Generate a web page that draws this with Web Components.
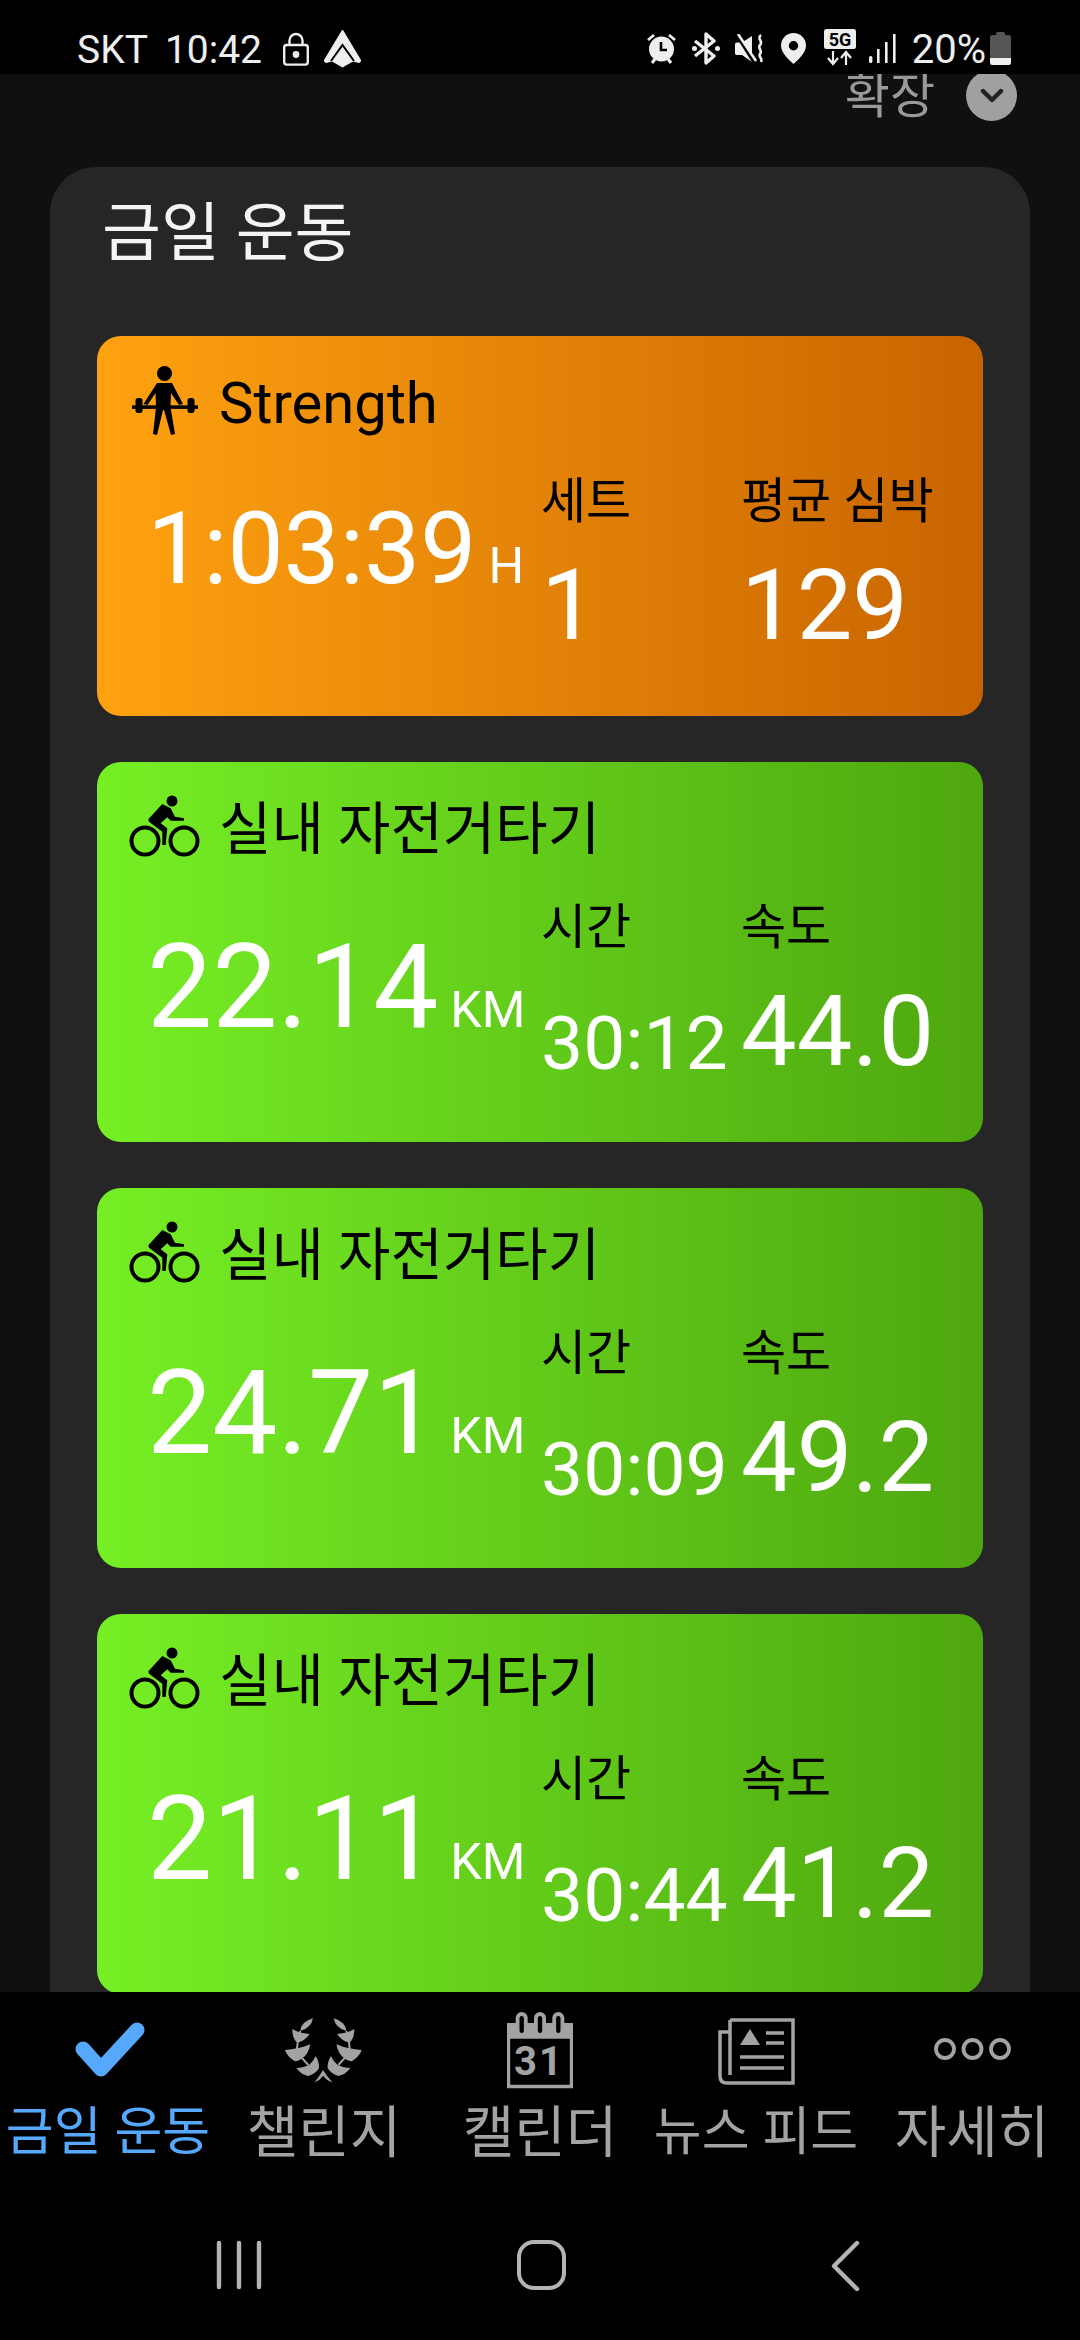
<!DOCTYPE html>
<html lang="ko">
<head>
<meta charset="utf-8">
<title>금일 운동</title>
<style>
  html, body { margin: 0; padding: 0; background: #000; }
  body { width: 1080px; height: 2340px; overflow: hidden; font-family: Roboto, "Noto Sans CJK KR", sans-serif; }
</style>
</head>
<body>
<app-screen>
  <status-bar></status-bar>
  <expand-row></expand-row>
  <today-panel heading="금일 운동">
    <workout-card kind="strength" name="Strength" value="1:03:39" unit="H">
      <workout-stat label="세트" value="1" size="big"></workout-stat>
      <workout-stat label="평균 심박" value="129" size="big"></workout-stat>
    </workout-card>
    <workout-card kind="bike" name="실내 자전거타기" value="22.14" unit="KM">
      <workout-stat label="시간" value="30:12"></workout-stat>
      <workout-stat label="속도" value="44.0" size="big"></workout-stat>
    </workout-card>
    <workout-card kind="bike" name="실내 자전거타기" value="24.71" unit="KM">
      <workout-stat label="시간" value="30:09"></workout-stat>
      <workout-stat label="속도" value="49.2" size="big"></workout-stat>
    </workout-card>
    <workout-card kind="bike" name="실내 자전거타기" value="21.11" unit="KM">
      <workout-stat label="시간" value="30:44"></workout-stat>
      <workout-stat label="속도" value="41.2" size="big"></workout-stat>
    </workout-card>
  </today-panel>
  <tab-bar></tab-bar>
  <system-keys></system-keys>
</app-screen>

<script>
const FONT = 'Roboto, "Noto Sans CJK KR", sans-serif';

class AppScreen extends HTMLElement {
    constructor() {
        super();
        this.attachShadow({ mode: 'open' });
        this.shadowRoot.innerHTML = `
            <style>
                :host {
                    display: flex;
                    flex-direction: column;
                    width: 1080px;
                    height: 2340px;
                    background: #101010;
                    overflow: hidden;
                    font-family: ${FONT};
                }
            </style>
            <slot></slot>
        `;
    }
}

class StatusBar extends HTMLElement {
    constructor() {
        super();
        this.attachShadow({ mode: 'open' });
        this.shadowRoot.innerHTML = `
            <style>
                :host {
                    display: flex;
                    flex: none;
                    height: 74px;
                    background: #000;
                    color: #eee;
                    font-size: 39px;
                    align-items: flex-start;
                    justify-content: space-between;
                    padding: 0 69px 0 77px;
                    box-sizing: border-box;
                    position: relative;
                    z-index: 1;
                }
                .side { display: flex; align-items: flex-start; height: 74px; }
                span { line-height: 46px; margin-top: 27px; white-space: nowrap; }
                svg { display: block; flex: none; fill: #eee; }
                .five {
                    width: 32px; height: 37px; margin-top: 29px; margin-left: 18px; flex: none;
                }
            </style>
            <div class="side">
                <span>SKT</span>
                <span style="margin-left:17px">10:42</span>
                <svg style="margin:32px 0 0 21px" width="26" height="34" viewBox="0 0 26 34">
                    <path d="M6.5 14V8.5a6.5 6.5 0 0 1 13 0V14" fill="none" stroke="#eee" stroke-width="2.4"/>
                    <rect x="1.2" y="13" width="23.6" height="19.6" rx="2.5" fill="none" stroke="#eee" stroke-width="2.4"/>
                    <circle cx="13" cy="22.5" r="3.4"/>
                </svg>
                <svg style="margin:30px 0 0 15px" width="37" height="38" viewBox="0 0 37 38">
                    <path d="M18.5 0 36.500 30q.5 2-1.500 2.500L29 31l-10.500 6L8 31l-6 1.500Q0 32 .5 30z" stroke="#eee" stroke-linejoin="round"/>
                    <path d="M7 31 18.500 15 30 31" fill="none" stroke="#000" stroke-width="2"/>
                </svg>
            </div>
            <div class="side">
                <svg style="margin-top:33px" width="29" height="31" viewBox="0 0 29 31">
                    <circle cx="14.500" cy="16" r="12.500"/>
                    <path d="M14 9v8h6" fill="none" stroke="#000" stroke-width="2.600"/>
                    <path d="M1 7l6-5M28 7l-6-5" stroke="#eee" stroke-width="2.800" fill="none"/>
                    <path d="M5 30l3-4M24 30l-3-4" stroke="#eee" stroke-width="3" fill="none"/>
                </svg>
                <svg style="margin:32px 0 0 16px" width="28" height="33" viewBox="0 0 28 33">
                    <path d="M3 9l19 15-8 7V2l8 7L3 24" fill="none" stroke="#eee" stroke-width="3.400" stroke-linejoin="round"/>
                    <circle cx="2.500" cy="16.500" r="2.500"/><circle cx="25.500" cy="16.500" r="2.500"/>
                </svg>
                <svg style="margin:34px 0 0 15px" width="29" height="30" viewBox="0 0 29 30">
                    <path d="M0 10q0-1.500 2-1.500h5L17 2v26L7 21H2q-2 0-2-1.500z"/>
                    <path d="M2 1l17 27" stroke="#000" stroke-width="3.600"/>
                    <path d="M3 0l18 27" stroke="#eee" stroke-width="2.600"/>
                    <path d="M26 1c-5 4 3 6-1 10-3 3 3 5 0 9-2 3 3 4 1 8" fill="none" stroke="#eee" stroke-width="2.600"/>
                </svg>
                <svg style="margin:33px 0 0 17px" width="25" height="31" viewBox="0 0 25 31">
                    <path fill-rule="evenodd" d="M12.500 0C5.500 0 0 5.500 0 12.500 0 20 8 27 12.500 31 17 27 25 20 25 12.500 25 5.500 19.500 0 12.500 0zm0 8a4.700 4.700 0 1 1 0 9.400 4.700 4.700 0 0 1 0-9.400z"/>
                </svg>
                <svg class="five" viewBox="0 0 32 37">
                    <rect x="0" y="0" width="32" height="20" rx="2.500"/>
                    <text x="16" y="17" text-anchor="middle" font-family="Roboto" font-weight="700" font-size="18" fill="#000">5G</text>
                    <path d="M9 22v12M4 29l5 6 5-6M22 36V24M17 29l5-6 5 6" fill="none" stroke="#eee" stroke-width="2.200"/>
                </svg>
                <svg style="margin:34px 0 0 13px" width="27" height="29" viewBox="0 0 27 29">
                    <rect x="0" y="22" width="3.400" height="7" rx="1.500"/>
                    <rect x="8" y="15" width="2.600" height="14"/>
                    <rect x="16" y="8" width="2.600" height="21"/>
                    <rect x="24" y="0" width="2.600" height="29"/>
                </svg>
                <span style="margin-left:16px;font-size:40px">20%</span>
                <svg style="margin:32px 0 0 4px" width="21" height="33" viewBox="0 0 21 33">
                    <path d="M6 3V1.500Q6 0 7.500 0h6Q15 0 15 1.500V3h3.500Q21 3 21 5.500V26H0V5.500Q0 3 2.500 3z" fill="#555"/>
                    <path d="M0 26h21v4.500Q21 33 18.500 33h-16Q0 33 0 30.500z"/>
                </svg>
            </div>
        `;
    }
}

class ExpandRow extends HTMLElement {
    constructor() {
        super();
        this.attachShadow({ mode: 'open' });
        this.shadowRoot.innerHTML = `
            <style>
                :host {
                    display: flex;
                    flex: none;
                    height: 93px;
                    justify-content: flex-end;
                    align-items: flex-start;
                    padding-right: 63px;
                    box-sizing: border-box;
                    color: #999;
                    font-size: 49px;
                }
                .txt { line-height: 46px; margin: 0 31px 0 0; }
                .btn {
                    width: 51px; height: 51px; border-radius: 50%;
                    background: #a0a0a0; margin-top: -4px;
                    display: flex; align-items: center; justify-content: center;
                }
            </style>
            <div class="txt">확장</div>
            <div class="btn">
                <svg width="24" height="16" viewBox="0 0 24 16">
                    <path d="M3 3l9 9 9-9" fill="none" stroke="#222" stroke-width="4.400" stroke-linecap="round" stroke-linejoin="round"/>
                </svg>
            </div>
        `;
    }
}

class TodayPanel extends HTMLElement {
    constructor() {
        super();
        this.attachShadow({ mode: 'open' });
        this.shadowRoot.innerHTML = `
            <style>
                :host {
                    display: block;
                    flex: 1;
                    min-height: 0;
                    margin: 0 50px;
                    padding: 0 47px;
                    background: #262626;
                    border-radius: 46px 46px 0 0;
                    overflow: hidden;
                }
                h1 {
                    margin: 0;
                    height: 169px;
                    padding-left: 5px;
                    box-sizing: border-box;
                    font-size: 64px;
                    font-weight: 400;
                    line-height: 134px;
                    color: #f4f4f4;
                }
                .list { display: flex; flex-direction: column; gap: 46px; }
            </style>
            <h1></h1>
            <div class="list"><slot></slot></div>
        `;
        this.shadowRoot.querySelector('h1').textContent = this.getAttribute('heading');
    }
}

const LIFTER = `<svg width="66" height="70" viewBox="0 0 66 70" style="margin-top:30px">
    <circle cx="32.500" cy="7.500" r="7.500"/>
    <path d="M25 17h15l11 21-4 1-8-12-.5 14 4.500 27-4 1-7-25h-1l-6 25-4-1 3-27-.5-14-8 12-4-1z"/>
    <rect x="0" y="39.300" width="66" height="3.600"/>
    <rect x="3.500" y="32" width="7" height="15" rx="2.500"/>
    <rect x="55.500" y="32" width="7" height="15" rx="2.500"/>
</svg>`;

const RIDER = `<svg width="72" height="70" viewBox="0 0 72 70" style="margin:28px 0 0 -3px">
    <circle cx="43" cy="11" r="5.500"/>
    <path d="M19.300 29.300 33.300 14l8.400 4.300 4.300 8.400 9 1.600v2.400H41.700l-3.400-3.400-6.600 6 6.600 5-1.600 16.700h-3.400v-13.300L20 31.700z"/>
    <circle cx="16" cy="51" r="13.500" fill="none" stroke="#000" stroke-width="4"/>
    <circle cx="55" cy="51" r="13.500" fill="none" stroke="#000" stroke-width="4"/>
</svg>`;

class WorkoutCard extends HTMLElement {
    constructor() {
        super();
        this.attachShadow({ mode: 'open' });
        const strength = this.getAttribute('kind') === 'strength';
        this.shadowRoot.innerHTML = `
            <style>
                :host {
                    display: block;
                    flex: none;
                    height: 380px;
                    border-radius: 24px;
                    overflow: hidden;
                    box-sizing: border-box;
                    color: #fff;
                    background: ${strength
                        ? 'linear-gradient(to right, #ffa210, #c86400)'
                        : 'linear-gradient(to right, #76ef25, #4ea70f)'};
                }
                .head {
                    display: flex;
                    align-items: flex-start;
                    height: 130px;
                    padding-left: 35px;
                    color: #000;
                }
                .icon { width: 87px; flex: none; }
                svg { display: block; }
                .name {
                    font-size: ${strength ? 58 : 57}px;
                    line-height: 70px;
                    margin-top: ${strength ? 32 : 33}px;
                    white-space: nowrap;
                }
                .body {
                    display: grid;
                    grid-template-columns: 444px 200px 1fr;
                }
                .main {
                    padding-left: 50px;
                    display: flex;
                    align-items: baseline;
                    margin-top: ${strength ? 13 : 25}px;
                    height: 140px;
                    white-space: nowrap;
                }
                .value { font-size: ${strength ? 100 : 116}px; line-height: 140px; }
                .unit { font-size: 50px; margin-left: 12px; }
            </style>
            <div class="head">
                <div class="icon">${strength ? LIFTER : RIDER}</div>
                <div class="name"></div>
            </div>
            <div class="body">
                <div class="main"><span class="value"></span><span class="unit"></span></div>
                <slot></slot>
            </div>
        `;
        this.shadowRoot.querySelector('.name').textContent = this.getAttribute('name');
        this.shadowRoot.querySelector('.value').textContent = this.getAttribute('value');
        this.shadowRoot.querySelector('.unit').textContent = this.getAttribute('unit');
    }
}

class WorkoutStat extends HTMLElement {
    constructor() {
        super();
        this.attachShadow({ mode: 'open' });
        const big = this.getAttribute('size') === 'big';
        this.shadowRoot.innerHTML = `
            <style>
                :host { display: block; white-space: nowrap; }
                .label { color: #000; font-size: 49px; line-height: 70px; margin-top: 1px; }
                .value {
                    font-size: ${big ? 99 : 75}px;
                    line-height: 110px;
                    margin-top: ${big ? 13 : 25}px;
                }
            </style>
            <div class="label"></div>
            <div class="value"></div>
        `;
        this.shadowRoot.querySelector('.label').textContent = this.getAttribute('label');
        this.shadowRoot.querySelector('.value').textContent = this.getAttribute('value');
    }
}

// laurel drawn in the coordinates of a 3x crop, left half then mirrored
const LEAVES = `
    <path d="M94 78Q96 50 132 40 126 70 94 78z"/>
    <path d="M70 72Q92 85 122 87 108 108 85 113 70 102 70 72z"/>
    <path d="M48 135Q70 134 84 130 106 126 124 118 118 148 100 160 85 172 75 167 55 155 48 135z"/>
    <path d="M82 190Q104 188 120 180 134 168 140 153 152 172 150 190 138 208 118 213 98 210 82 190z"/>
    <path d="M94 78 86 113 84 130 100 160 118 180" fill="none" stroke="currentColor" stroke-width="6"/>
`;

const TAB_ICONS = {
    check: `<svg width="70" height="56" viewBox="0 0 70 56" style="margin:30px 0 0 4px">
        <path d="M8 27 26 47 62 8" fill="none" stroke="currentColor" stroke-width="15" stroke-linecap="round" stroke-linejoin="round"/>
    </svg>`,
    laurel: `<svg width="110" height="90" viewBox="0 0 330 270" style="margin-top:13px" fill="currentColor">
        ${LEAVES}
        <g transform="translate(326 0) scale(-1 1)">${LEAVES}</g>
        <path d="M137 232Q150 215 162 195 174 215 190 232 172 226 163 212 152 226 137 232z"/>
    </svg>`,
    calendar: `<svg width="66" height="78" viewBox="0 0 66 78" style="margin-top:20px">
        <path d="M1.500 25h63v49.500h-63z" fill="none" stroke="currentColor" stroke-width="3.400"/>
        <rect x="0" y="11" width="66" height="14" fill="currentColor"/>
        <g fill="currentColor">
            <rect x="8.700" y="0" width="12" height="24" rx="6"/>
            <rect x="27" y="0" width="12" height="24" rx="6"/>
            <rect x="45.300" y="0" width="12" height="24" rx="6"/>
        </g>
        <g fill="#000">
            <rect x="12.500" y="4" width="4.400" height="17" rx="2.200"/>
            <rect x="30.800" y="4" width="4.400" height="17" rx="2.200"/>
            <rect x="49.100" y="4" width="4.400" height="17" rx="2.200"/>
        </g>
        <text x="32" y="63" text-anchor="middle" font-family="Roboto" font-weight="700" font-size="40" letter-spacing="2" fill="currentColor">31</text>
    </svg>`,
    news: `<svg width="77" height="67" viewBox="0 0 77 67" style="margin-top:26px">
        <path d="M12 2h63v63H9q-7 0-7-7V14h9" fill="none" stroke="currentColor" stroke-width="3.500"/>
        <path d="M12 2v55" fill="none" stroke="currentColor" stroke-width="3.500"/>
        <path d="M32 11 42 27H22z" fill="currentColor"/>
        <path d="M48 15h18M48 25h18M22 39h44M22 50h44" stroke="currentColor" stroke-width="3.400"/>
    </svg>`,
    more: `<svg width="77" height="24" viewBox="0 0 77 24" style="margin-top:45px">
        <g fill="none" stroke="currentColor" stroke-width="3.800">
            <circle cx="11" cy="12" r="9"/><circle cx="38.500" cy="12" r="9"/><circle cx="66" cy="12" r="9"/>
        </g>
    </svg>`
};

class TabItem extends HTMLElement {
    constructor() {
        super();
        this.attachShadow({ mode: 'open' });
        this.shadowRoot.innerHTML = `
            <style>
                :host {
                    display: block;
                    width: 216px;
                    text-align: center;
                    color: ${this.hasAttribute('active') ? '#55a8fb' : '#a3a3a3'};
                }
                .ic { height: 102px; display: flex; justify-content: center; align-items: flex-start; }
                .lb {
                    font-size: ${this.getAttribute('size') || 52}px;
                    line-height: 66px;
                    margin-top: 6px;
                    white-space: nowrap;
                }
            </style>
            <div class="ic">${TAB_ICONS[this.getAttribute('icon')]}</div>
            <div class="lb"></div>
        `;
        this.shadowRoot.querySelector('.lb').textContent = this.getAttribute('label');
    }
}

class TabBar extends HTMLElement {
    constructor() {
        super();
        this.attachShadow({ mode: 'open' });
        this.shadowRoot.innerHTML = `
            <style>
                :host { display: flex; flex: none; height: 222px; background: #000; }
            </style>
            <tab-item icon="check" label="금일 운동" active></tab-item>
            <tab-item icon="laurel" label="챌린지" size="56"></tab-item>
            <tab-item icon="calendar" label="캘린더" size="56"></tab-item>
            <tab-item icon="news" label="뉴스 피드"></tab-item>
            <tab-item icon="more" label="자세히" size="56"></tab-item>
        `;
    }
}

class SystemKeys extends HTMLElement {
    constructor() {
        super();
        this.attachShadow({ mode: 'open' });
        this.shadowRoot.innerHTML = `
            <style>
                :host {
                    display: flex;
                    flex: none;
                    height: 126px;
                    background: #000;
                    padding: 26px 0 0 216px;
                    box-sizing: border-box;
                    align-items: flex-start;
                }
                svg { display: block; flex: none; }
            </style>
            <svg width="46" height="50" viewBox="0 0 46 50">
                <path d="M3 3v44M23 3v44M43 3v44" stroke="#b4b4b4" stroke-width="4.400" stroke-linecap="round"/>
            </svg>
            <svg style="margin-left:255px" width="49" height="50" viewBox="0 0 49 50">
                <rect x="2" y="2" width="45" height="46" rx="15" fill="none" stroke="#b4b4b4" stroke-width="4"/>
            </svg>
            <svg style="margin-left:264px" width="30" height="52" viewBox="0 0 30 52">
                <path d="M27 3 4 26l23 23" fill="none" stroke="#b4b4b4" stroke-width="4.400" stroke-linecap="round" stroke-linejoin="round"/>
            </svg>
        `;
    }
}

customElements.define('app-screen', AppScreen);
customElements.define('status-bar', StatusBar);
customElements.define('expand-row', ExpandRow);
customElements.define('today-panel', TodayPanel);
customElements.define('workout-card', WorkoutCard);
customElements.define('workout-stat', WorkoutStat);
customElements.define('tab-item', TabItem);
customElements.define('tab-bar', TabBar);
customElements.define('system-keys', SystemKeys);
</script>
</body>
</html>
